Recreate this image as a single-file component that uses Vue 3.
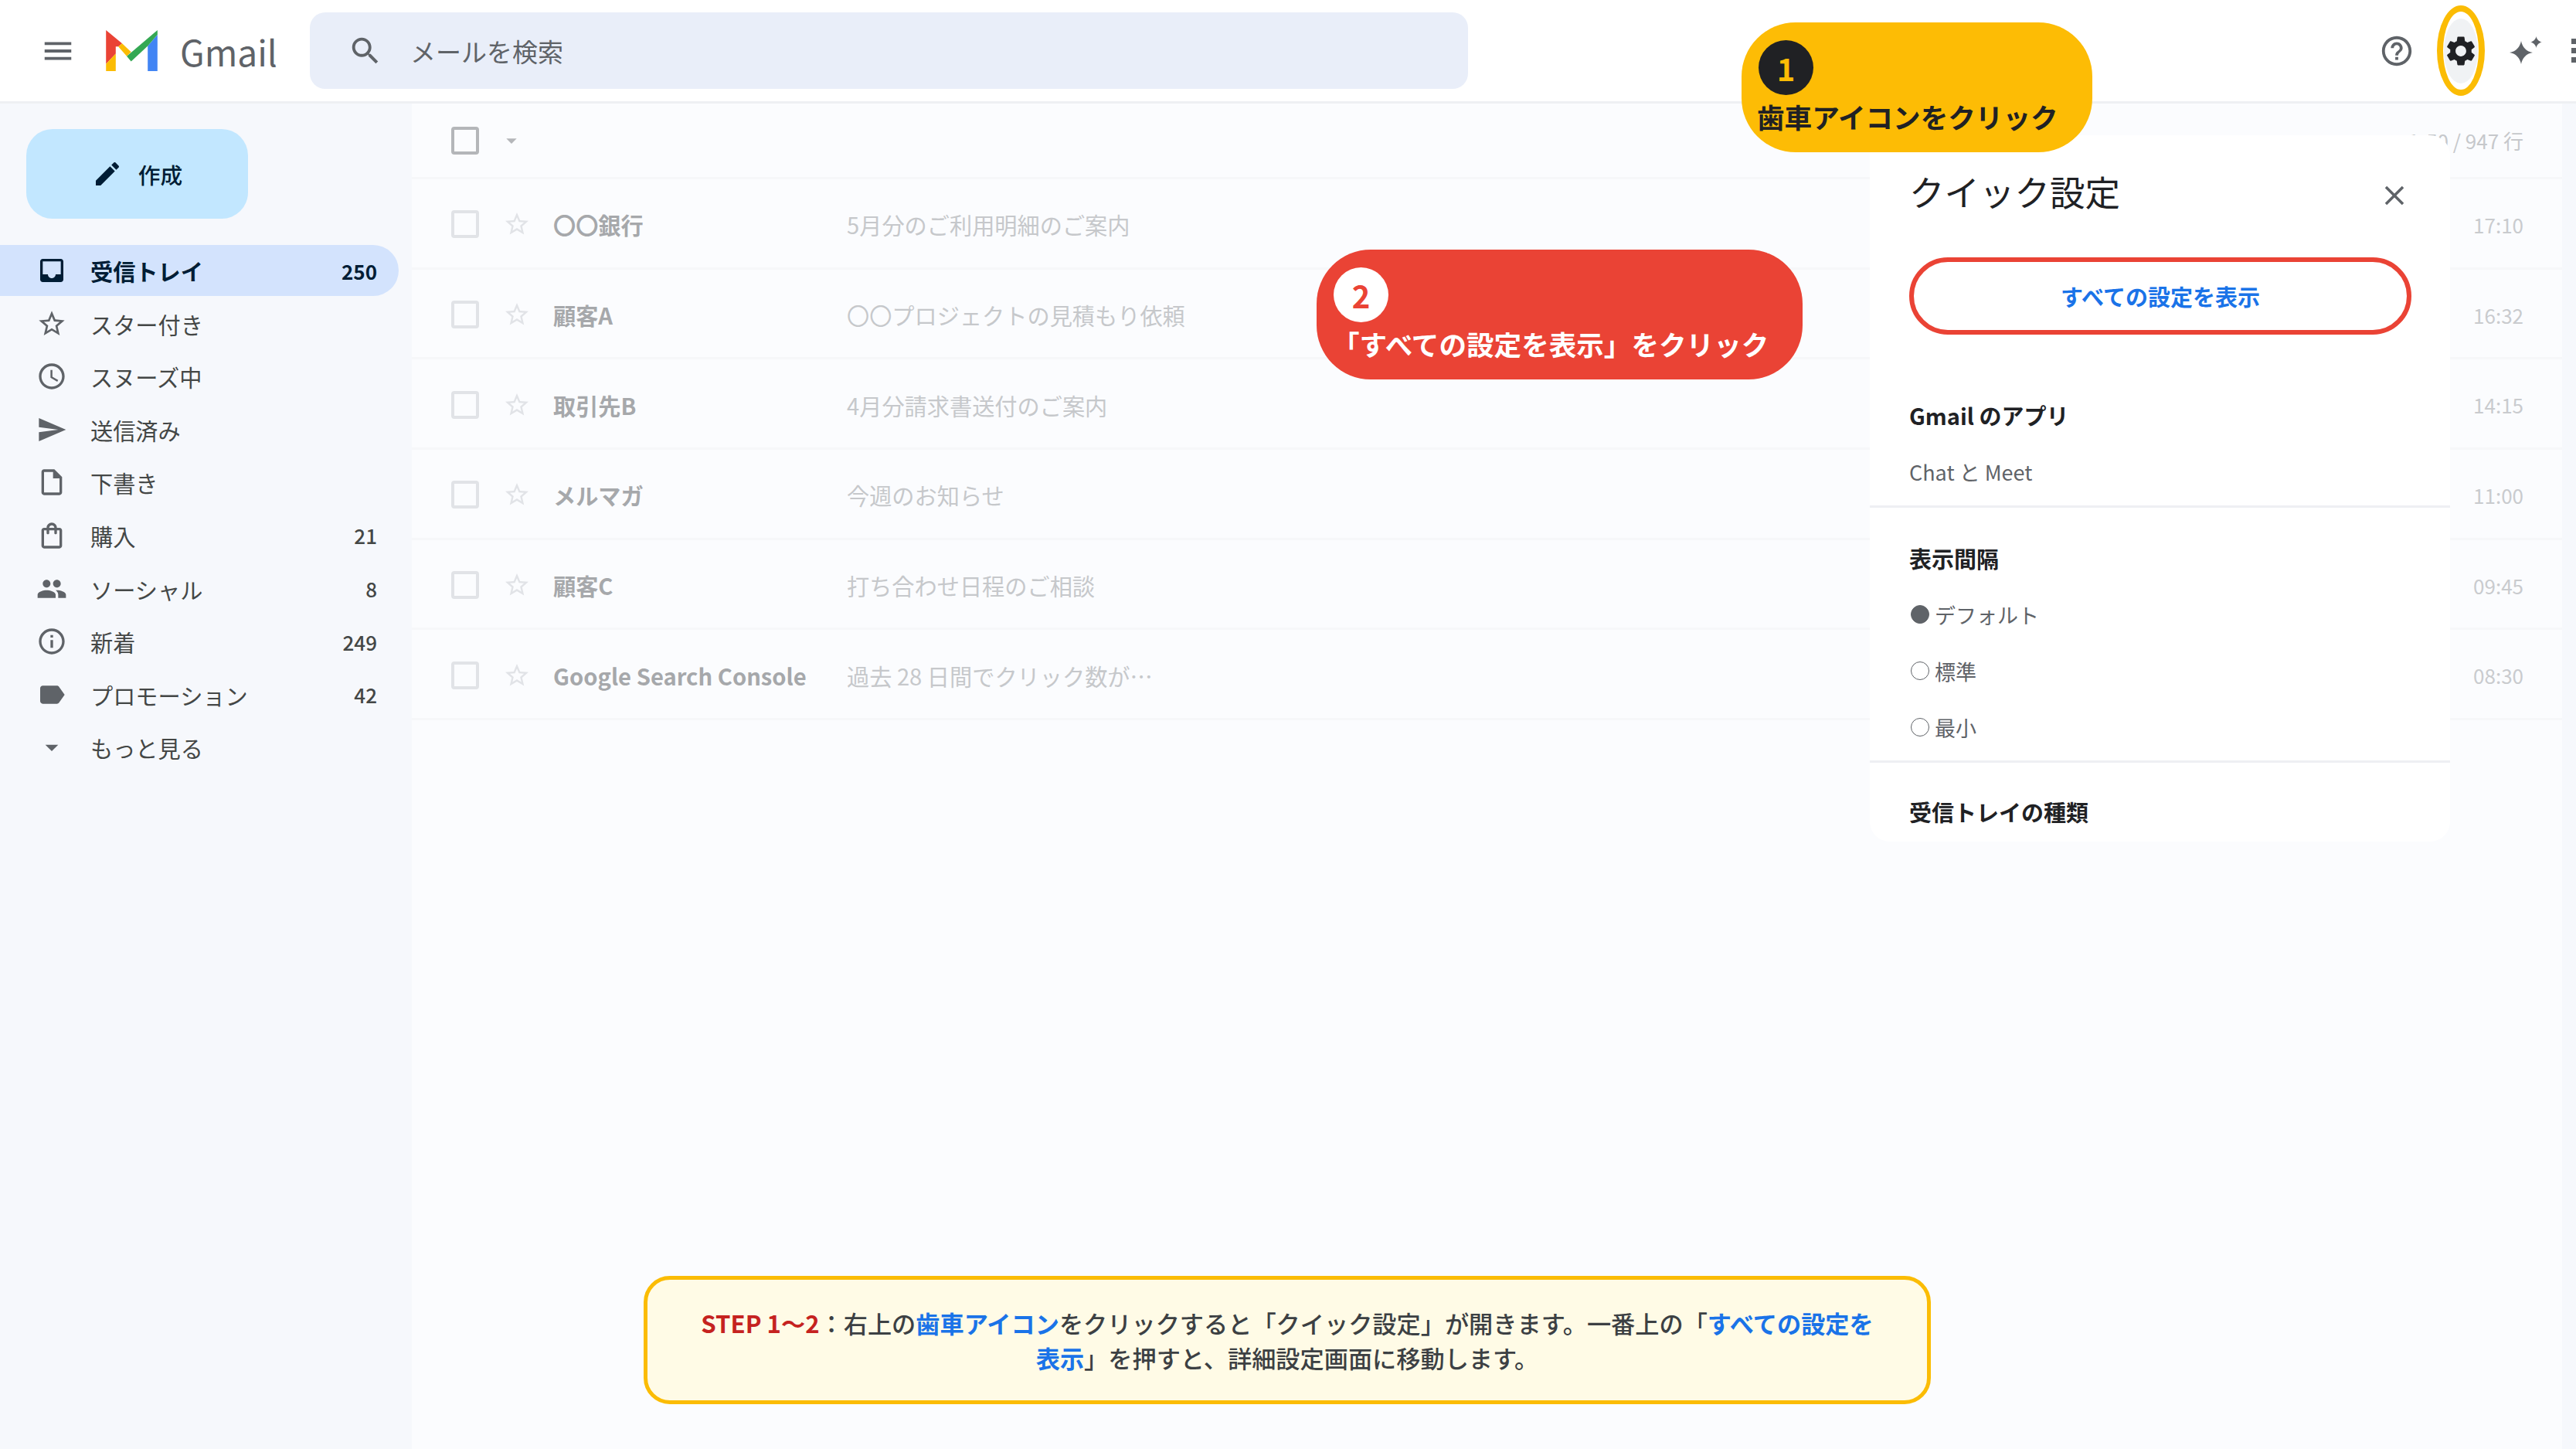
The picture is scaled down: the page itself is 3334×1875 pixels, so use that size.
<script setup>
const icons = {
  inbox: 'M19 3H5c-1.1 0-2 .9-2 2v14c0 1.1.9 2 2 2h14c1.1 0 2-.9 2-2V5c0-1.1-.9-2-2-2zm0 12h-4c0 1.66-1.35 3-3 3s-3-1.34-3-3H4.99V5H19v10z',
  star: 'M22 9.24l-7.19-.62L12 2 9.19 8.63 2 9.24l5.46 4.73L5.82 21 12 17.27 18.18 21l-1.63-7.03L22 9.24zM12 15.4l-3.76 2.27 1-4.28-3.32-2.88 4.38-.38L12 6.1l1.71 4.04 4.38.38-3.32 2.88 1 4.28L12 15.4z',
  clock: 'M11.99 2C6.47 2 2 6.48 2 12s4.47 10 9.99 10C17.52 22 22 17.52 22 12S17.52 2 11.99 2zM12 20c-4.42 0-8-3.58-8-8s3.58-8 8-8 8 3.58 8 8-3.58 8-8 8zm.5-13H11v6l5.25 3.15.75-1.23-4.5-2.67z',
  send: 'M2.01 21L23 12 2.01 3 2 10l15 2-15 2z',
  draft: 'M14 2H6c-1.1 0-2 .9-2 2v16c0 1.1.9 2 2 2h12c1.1 0 2-.9 2-2V8l-6-6zm4 18H6V4h7v5h5v11z',
  bag: 'M18 6h-2c0-2.21-1.79-4-4-4S8 3.79 8 6H6c-1.1 0-2 .9-2 2v12c0 1.1.9 2 2 2h12c1.1 0 2-.9 2-2V8c0-1.1-.9-2-2-2zm-6-2c1.1 0 2 .9 2 2h-4c0-1.1.9-2 2-2zm6 16H6V8h2v2c0 .55.45 1 1 1s1-.45 1-1V8h4v2c0 .55.45 1 1 1s1-.45 1-1V8h2v12z',
  people: 'M16 11c1.66 0 2.99-1.34 2.99-3S17.66 5 16 5c-1.66 0-3 1.34-3 3s1.34 3 3 3zm-8 0c1.66 0 2.99-1.34 2.99-3S9.66 5 8 5C6.34 5 5 6.34 5 8s1.34 3 3 3zm0 2c-2.33 0-7 1.17-7 3.5V19h14v-2.5c0-2.33-4.67-3.5-7-3.5zm8 0c-.29 0-.62.02-.97.05 1.16.84 1.97 1.97 1.97 3.45V19h6v-2.5c0-2.33-4.67-3.5-7-3.5z',
  info: 'M11 7h2v2h-2zm0 4h2v6h-2zm1-9C6.48 2 2 6.48 2 12s4.48 10 10 10 10-4.48 10-10S17.52 2 12 2zm0 18c-4.41 0-8-3.59-8-8s3.59-8 8-8 8 3.59 8 8-3.59 8-8 8z',
  label: 'M17.63 5.84C17.27 5.33 16.67 5 16 5L5 5.01C3.9 5.01 3 5.9 3 7v10c0 1.1.9 1.99 2 1.99L16 19c.67 0 1.27-.33 1.63-.84L22 12l-4.37-6.16z',
  more: 'M7 10l5 5 5-5z'
}

const navItems = [
  { icon: 'inbox', label: '受信トレイ', count: '250', active: true },
  { icon: 'star', label: 'スター付き' },
  { icon: 'clock', label: 'スヌーズ中' },
  { icon: 'send', label: '送信済み' },
  { icon: 'draft', label: '下書き' },
  { icon: 'bag', label: '購入', count: '21' },
  { icon: 'people', label: 'ソーシャル', count: '8' },
  { icon: 'info', label: '新着', count: '249' },
  { icon: 'label', label: 'プロモーション', count: '42' },
  { icon: 'more', label: 'もっと見る' }
]

const mails = [
  { from: '〇〇銀行', subject: '5月分のご利用明細のご案内', time: '17:10' },
  { from: '顧客A', subject: '〇〇プロジェクトの見積もり依頼', time: '16:32' },
  { from: '取引先B', subject: '4月分請求書送付のご案内', time: '14:15' },
  { from: 'メルマガ', subject: '今週のお知らせ', time: '11:00' },
  { from: '顧客C', subject: '打ち合わせ日程のご相談', time: '09:45' },
  { from: 'Google Search Console', subject: '過去 28 日間でクリック数が…', time: '08:30' }
]

const densities = [
  { label: 'デフォルト', on: true },
  { label: '標準' },
  { label: '最小' }
]
</script>

<template>
  <div class="page">
    <header class="topbar">
      <div class="brand">
        <svg class="menu-icon" viewBox="0 0 24 24"><path d="M3 18h18v-2H3v2zm0-5h18v-2H3v2zm0-7v2h18V6H3z" /></svg>
        <svg class="logo" viewBox="0 0 201 160">
          <polygon fill="#ea4335" points="0,0 63,52 48,64 38,64 38,92 0,132" />
          <polygon fill="#fbbc04" points="0,132 38,92 38,160 0,160" />
          <polygon fill="#fbbc04" points="63,52 98,85 81,102 48,64" />
          <polygon fill="#4285f4" points="201,17 201,160 163,160 163,62" />
          <polygon fill="#34a853" points="201,0 201,17 163,62 98,122 81,102" />
        </svg>
        <span class="wordmark">Gmail</span>
      </div>
      <div class="search">
        <svg class="search-icon" viewBox="0 0 24 24"><path d="M15.5 14h-.79l-.28-.27C15.41 12.59 16 11.11 16 9.5 16 5.91 13.09 3 9.5 3S3 5.91 3 9.5 5.91 16 9.5 16c1.61 0 3.09-.59 4.23-1.57l.27.28v.79l5 4.99L20.49 19l-4.99-5zm-6 0C7.01 14 5 11.99 5 9.5S7.01 5 9.5 5 14 7.01 14 9.5 11.99 14 9.5 14z" /></svg>
        <span>メールを検索</span>
      </div>
      <div class="actions">
        <svg class="help-icon" viewBox="0 0 24 24"><path d="M11 18h2v-2h-2v2zm1-16C6.48 2 2 6.48 2 12s4.48 10 10 10 10-4.48 10-10S17.52 2 12 2zm0 18c-4.41 0-8-3.59-8-8s3.59-8 8-8 8 3.59 8 8-3.59 8-8 8zm0-14c-2.21 0-4 1.79-4 4h2c0-1.1.9-2 2-2s2 .9 2 2c0 2-3 1.75-3 5h2c0-2.25 3-2.5 3-5 0-2.21-1.79-4-4-4z" /></svg>
        <div class="gear-ring">
          <div class="gear-bg">
            <svg class="gear-icon" viewBox="0 0 24 24"><path d="M19.14 12.94c.04-.3.06-.61.06-.94 0-.32-.02-.64-.07-.94l2.03-1.58a.49.49 0 00.12-.61l-1.92-3.32a.488.488 0 00-.59-.22l-2.39.96c-.5-.38-1.03-.7-1.62-.94l-.36-2.54a.484.484 0 00-.48-.41h-3.84c-.24 0-.43.17-.47.41l-.36 2.54c-.59.24-1.13.57-1.62.94l-2.39-.96c-.22-.08-.47 0-.59.22L2.74 8.87c-.12.21-.08.47.12.61l2.03 1.58c-.05.3-.09.63-.09.94s.02.64.07.94l-2.03 1.58a.49.49 0 00-.12.61l1.92 3.32c.12.22.37.29.59.22l2.39-.96c.5.38 1.03.7 1.62.94l.36 2.54c.05.24.24.41.48.41h3.84c.24 0 .44-.17.47-.41l.36-2.54c.59-.24 1.13-.56 1.62-.94l2.39.96c.22.08.47 0 .59-.22l1.92-3.32c.12-.22.07-.47-.12-.61l-2.01-1.58zM12 15.6c-1.98 0-3.6-1.62-3.6-3.6s1.62-3.6 3.6-3.6 3.6 1.62 3.6 3.6-1.62 3.6-3.6 3.6z" /></svg>
          </div>
        </div>
        <svg class="spark-icon" viewBox="0 0 42 36">
          <path d="M15 6c1.4 7.6 6.400 13.600 15 15-8.600 1.400-13.600 7.400-15 15-1.400-7.600-6.400-13.600-15-15 8.600-1.400 13.600-7.400 15-15z" />
          <path d="M34.500 0c.7 3.800 3.500 6.800 7.500 7.500-4 .7-6.800 3.700-7.500 7.500-.7-3.800-3.500-6.800-7.500-7.500 4-.7 6.800-3.700 7.500-7.500z" />
        </svg>
        <div class="apps">
          <i v-for="n in 9" :key="n"></i>
        </div>
      </div>
    </header>

    <div class="body">
      <aside class="sidebar">
        <button class="compose">
          <svg viewBox="0 0 24 24"><path d="M3 17.250V21h3.750L17.810 9.940l-3.750-3.750L3 17.250zM20.710 7.040c.39-.39.39-1.020 0-1.410l-2.340-2.340c-.39-.39-1.020-.39-1.410 0l-1.830 1.830 3.750 3.750 1.830-1.830z" /></svg>
          <span>作成</span>
        </button>
        <nav class="nav">
          <div v-for="item in navItems" :key="item.label" class="nav-row" :class="{ active: item.active }">
            <svg viewBox="0 0 24 24"><path :d="icons[item.icon]" /></svg>
            <span class="nav-label">{{ item.label }}</span>
            <span v-if="item.count" class="nav-count">{{ item.count }}</span>
          </div>
        </nav>
      </aside>

      <main class="list">
        <div class="toolbar">
          <span class="check dark"></span>
          <svg class="caret" viewBox="0 0 24 24"><path d="M7 10l5 5 5-5z" /></svg>
          <span class="range">1-50 / 947 行</span>
        </div>
        <div v-for="mail in mails" :key="mail.from" class="mail">
          <span class="check"></span>
          <svg class="mail-star" viewBox="0 0 24 24"><path :d="icons.star" /></svg>
          <span class="from">{{ mail.from }}</span>
          <span class="subject">{{ mail.subject }}</span>
          <span class="time">{{ mail.time }}</span>
        </div>
      </main>
      <div class="edge"></div>
    </div>

    <section class="panel">
      <div class="panel-head">
        <span>クイック設定</span>
        <svg viewBox="0 0 24 24"><path d="M19 6.410L17.590 5 12 10.590 6.410 5 5 6.410 10.590 12 5 17.590 6.410 19 12 13.410 17.590 19 19 17.590 13.410 12z" /></svg>
      </div>
      <button class="all-settings">すべての設定を表示</button>
      <h3 class="panel-title apps-title">Gmail のアプリ</h3>
      <p class="chat">Chat と Meet</p>
      <hr class="rule first" />
      <h3 class="panel-title">表示間隔</h3>
      <div class="radios">
        <div v-for="d in densities" :key="d.label" class="radio">
          <span class="dot" :class="{ on: d.on }"></span>
          <span>{{ d.label }}</span>
        </div>
      </div>
      <hr class="rule second" />
      <h3 class="panel-title">受信トレイの種類</h3>
    </section>

    <div class="bubble yellow">
      <span class="num">1</span>
      <span class="bubble-text">歯車アイコンをクリック</span>
    </div>
    <div class="bubble red">
      <span class="num">2</span>
      <span class="bubble-text">「すべての設定を表示」をクリック</span>
    </div>

    <div class="note">
      <p><b class="step">STEP 1〜2</b>：右上の<b class="link">歯車アイコン</b>をクリックすると「クイック設定」が開きます。一番上の「<b class="link">すべての設定を表示</b>」を押すと、詳細設定画面に移動します。</p>
    </div>
  </div>
</template>

<style>
html,
body {
  margin: 0;
  background: #f6f8fc;
}
</style>

<style scoped>
.page {
  position: relative;
  width: 3334px;
  height: 1875px;
  overflow: hidden;
  display: flex;
  flex-direction: column;
  background: #f6f8fc;
  font-family: "Noto Sans CJK JP", "Noto Sans", sans-serif;
  color: #3c4043;
}

svg {
  display: block;
  flex: none;
  fill: currentColor;
}

.topbar {
  flex: none;
  height: 131px;
  display: flex;
  align-items: center;
  background: #fff;
  border-bottom: 3px solid #eef0f3;
  overflow: hidden;
}

.brand {
  flex: none;
  width: 401px;
  display: flex;
  align-items: center;
  padding-left: 52px;
  box-sizing: border-box;
  color: #5f6368;
}

.menu-icon {
  width: 46px;
  height: 46px;
}

.logo {
  width: 67px;
  height: 53px;
  margin-left: 39px;
}

.wordmark {
  margin-left: 29px;
  font-size: 46px;
  line-height: 60px;
}

.search {
  flex: none;
  width: 1499px;
  height: 99px;
  display: flex;
  align-items: center;
  padding-left: 49px;
  box-sizing: border-box;
  border-radius: 20px;
  background: #e9eef9;
  font-size: 33px;
  color: #5f6368;
}

.search-icon {
  width: 46px;
  height: 46px;
  margin-right: 35px;
}

.actions {
  flex: 1;
  display: flex;
  align-items: center;
  padding-left: 1179px;
  color: #5f6368;
}

.help-icon {
  width: 46px;
  height: 46px;
}

.gear-ring {
  flex: none;
  width: 62px;
  height: 117px;
  margin-left: 29px;
  box-sizing: border-box;
  border: 8px solid #fbbc04;
  border-radius: 50%;
  display: flex;
  align-items: center;
  justify-content: center;
}

.gear-bg {
  flex: none;
  width: 44px;
  height: 84px;
  border-radius: 50%;
  background: #f0f2f4;
  display: flex;
  align-items: center;
  justify-content: center;
  color: #202124;
}

.gear-icon {
  width: 46px;
  height: 46px;
}

.spark-icon {
  width: 42px;
  height: 36px;
  margin-left: 32px;
  margin-top: -2px;
}

.apps {
  flex: none;
  display: grid;
  grid-template-columns: repeat(3, 7px);
  gap: 5px;
  margin-left: 38px;
}

.apps i {
  width: 7px;
  height: 7px;
  background: #5f6368;
}

.body {
  flex: 1;
  display: flex;
  min-height: 0;
}

.sidebar {
  flex: none;
  width: 533px;
  padding-top: 33px;
  box-sizing: border-box;
  background: #f6f8fc;
}

.compose {
  width: 287px;
  height: 116px;
  margin-left: 34px;
  display: flex;
  align-items: center;
  justify-content: center;
  gap: 20px;
  padding: 0;
  border: none;
  border-radius: 34px;
  background: #c2e7ff;
  color: #001d35;
  font-family: inherit;
  font-size: 28.700px;
  font-weight: 500;
}

.compose svg {
  width: 40px;
  height: 40px;
}

.nav {
  margin-top: 34px;
  display: flex;
  flex-direction: column;
  gap: 2.600px;
}

.nav-row {
  width: 516px;
  height: 66px;
  box-sizing: border-box;
  padding: 0 28px 0 47px;
  display: flex;
  align-items: center;
  border-radius: 0 33px 33px 0;
  font-size: 29.200px;
  color: #444746;
}

.nav-row svg {
  width: 40px;
  height: 40px;
  color: #5f6368;
}

.nav-row.active {
  background: #d3e3fd;
  color: #001d35;
  font-weight: 700;
}

.nav-row.active svg {
  color: #001d35;
}

.nav-label {
  margin-left: 30px;
}

.nav-count {
  margin-left: auto;
  font-size: 26px;
  font-weight: 500;
}

.nav-row.active .nav-count {
  font-weight: 700;
}

.list {
  flex: 1;
  min-width: 0;
  background: #fbfcfe;
}

.edge {
  flex: none;
  width: 18px;
}

.toolbar,
.mail {
  display: flex;
  align-items: center;
  padding: 0 50px 0 51px;
  border-bottom: 3px solid #f6f7f9;
  box-sizing: border-box;
}

.toolbar {
  height: 98px;
}

.mail {
  height: 116.700px;
  padding-top: 3px;
}

.check {
  flex: none;
  width: 36px;
  height: 36px;
  box-sizing: border-box;
  border: 4px solid #e1e3e7;
  border-radius: 4px;
}

.check.dark {
  border-color: #b4b6b9;
}

.caret {
  width: 32px;
  height: 32px;
  margin-left: 26px;
  color: #b4b6b9;
}

.range {
  margin-left: auto;
  font-size: 26px;
  color: #c6c8cb;
}

.mail-star {
  width: 36px;
  height: 36px;
  margin-left: 31px;
  color: #e1e3e7;
}

.from {
  flex: none;
  width: 380px;
  margin-left: 29px;
  font-size: 29.200px;
  font-weight: 700;
  color: #a6a8ab;
}

.subject {
  font-size: 29.200px;
  color: #c6c8cb;
}

.time {
  margin-left: auto;
  font-size: 26px;
  color: #c9cbce;
}

.panel {
  position: absolute;
  left: 2420px;
  top: 175px;
  width: 751px;
  height: 914px;
  box-sizing: border-box;
  overflow: hidden;
  border-radius: 26px;
  background: #fff;
}

.panel-head {
  height: 144px;
  padding: 0 51px;
  display: flex;
  align-items: center;
  justify-content: space-between;
  font-size: 45.500px;
  color: #202124;
}

.panel-head svg {
  width: 42px;
  height: 42px;
  margin-top: 11px;
  color: #5f6368;
}

.all-settings {
  display: block;
  width: 650px;
  height: 100px;
  margin: 14px 0 0 51px;
  padding: 0;
  border: 6px solid #ea4335;
  border-radius: 50px;
  background: #fff;
  color: #1a73e8;
  font-family: inherit;
  font-size: 29px;
  font-weight: 700;
}

.panel-title {
  margin: 41px 0 0 51px;
  font-size: 29px;
  font-weight: 700;
  line-height: 44px;
  color: #202124;
}

.apps-title {
  margin-top: 82px;
}

.chat {
  margin: 30px 0 0 51px;
  font-size: 27px;
  line-height: 44px;
  color: #5f6368;
}

.rule {
  height: 3px;
  margin: 21px 0 0;
  border: none;
  background: #eeeff3;
}

.rule + .panel-title {
  margin-top: 43px;
}

.rule.second + .panel-title {
  margin-top: 41px;
}

.radios {
  margin: 29px 0 0 53px;
  display: flex;
  flex-direction: column;
  gap: 29px;
}

.radio {
  height: 44px;
  display: flex;
  align-items: center;
  gap: 7px;
  font-size: 27px;
  color: #5f6368;
}

.dot {
  flex: none;
  width: 24px;
  height: 24px;
  box-sizing: border-box;
  border: 1.500px solid #5f6368;
  border-radius: 50%;
}

.dot.on {
  background: #5f6368;
}

.bubble {
  position: absolute;
  height: 168px;
  box-sizing: border-box;
  padding: 23px 22px 0;
  border-radius: 70px;
  display: flex;
  flex-direction: column;
  align-items: flex-start;
  gap: 6px;
  font-weight: 700;
}

.bubble.yellow {
  left: 2254px;
  top: 29px;
  width: 454px;
  background: #fdbc05;
  color: #202124;
}

.bubble.red {
  left: 1704px;
  top: 323px;
  width: 629px;
  background: #ea4335;
  color: #fff;
}

.num {
  width: 71px;
  height: 71px;
  flex: none;
  border-radius: 50%;
  display: flex;
  align-items: center;
  justify-content: center;
  font-size: 40px;
  font-weight: 700;
}

.yellow .num {
  background: #202124;
  color: #fdbc05;
}

.red .num {
  background: #fff;
  color: #ea4335;
}

.bubble-text {
  margin-left: -2px;
  font-size: 35.600px;
  line-height: 44px;
  white-space: nowrap;
}

.note {
  position: absolute;
  left: 833px;
  top: 1651px;
  width: 1666px;
  height: 166px;
  box-sizing: border-box;
  padding: 0 64px;
  display: flex;
  align-items: center;
  border: 5px solid #fbbc04;
  border-radius: 34px;
  background: #fffbe6;
  font-size: 31.200px;
  font-weight: 500;
  line-height: 45px;
  text-align: center;
}

.note p {
  margin: 0;
}

.step {
  color: #c5221f;
}

.link {
  color: #1a73e8;
}
</style>
